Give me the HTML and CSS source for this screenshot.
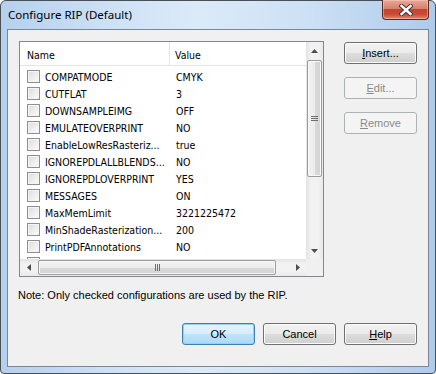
FILE: index.html
```html
<!DOCTYPE html>
<html>
<head>
<meta charset="utf-8">
<link rel="stylesheet" href="styles.css">
</head>
<body>
<div class="window">
  <div class="titlebar">
    <span class="title">Configure RIP (Default)</span>
    <div class="close">
      <svg width="14" height="12" viewBox="0 0 14 12">
        <path d="M2.5 2 L11.5 10 M11.5 2 L2.5 10" stroke="#3b3b3b" stroke-width="4.4" stroke-linecap="square"/>
        <path d="M2.5 2 L11.5 10 M11.5 2 L2.5 10" stroke="#ffffff" stroke-width="2.4" stroke-linecap="square"/>
      </svg>
    </div>
  </div>
  <div class="client">
    <div class="main">
      <div class="listview">
        <div class="lv-content">
          <div class="lv-header">
            <div class="hcol hname">Name</div>
            <div class="hcol hvalue">Value</div>
          </div>
          <div class="rows">
            <div class="row"><span class="cb"></span><span class="n">COMPATMODE</span><span class="v">CMYK</span></div>
            <div class="row"><span class="cb"></span><span class="n">CUTFLAT</span><span class="v">3</span></div>
            <div class="row"><span class="cb"></span><span class="n">DOWNSAMPLEIMG</span><span class="v">OFF</span></div>
            <div class="row"><span class="cb"></span><span class="n">EMULATEOVERPRINT</span><span class="v">NO</span></div>
            <div class="row"><span class="cb"></span><span class="n">EnableLowResRasteriz...</span><span class="v">true</span></div>
            <div class="row"><span class="cb"></span><span class="n">IGNOREPDLALLBLENDS...</span><span class="v">NO</span></div>
            <div class="row"><span class="cb"></span><span class="n">IGNOREPDLOVERPRINT</span><span class="v">YES</span></div>
            <div class="row"><span class="cb"></span><span class="n">MESSAGES</span><span class="v">ON</span></div>
            <div class="row"><span class="cb"></span><span class="n">MaxMemLimit</span><span class="v">3221225472</span></div>
            <div class="row"><span class="cb"></span><span class="n">MinShadeRasterization...</span><span class="v">200</span></div>
            <div class="row"><span class="cb"></span><span class="n">PrintPDFAnnotations</span><span class="v">NO</span></div>
            <div class="row"><span class="cb"></span><span class="n">SPOTRENDERINTENT</span><span class="v">0</span></div>
          </div>
        </div>
        <div class="vscroll">
          <div class="sbtn"><svg width="7" height="4" viewBox="0 0 7 4"><path d="M3.5 0 L7 4 L0 4 Z" fill="#4d4d4d"/></svg></div>
          <div class="vtrack">
            <div class="vthumb"><span class="grip-v"></span></div>
          </div>
          <div class="sbtn"><svg width="7" height="4" viewBox="0 0 7 4"><path d="M0 0 L7 0 L3.5 4 Z" fill="#4d4d4d"/></svg></div>
        </div>
        <div class="hscroll">
          <div class="sbtn"><svg width="4" height="7" viewBox="0 0 4 7"><path d="M4 0 L4 7 L0 3.5 Z" fill="#4d4d4d"/></svg></div>
          <div class="htrack">
            <div class="hthumb"><span class="grip-h"></span></div>
          </div>
          <div class="sbtn"><svg width="4" height="7" viewBox="0 0 4 7"><path d="M0 0 L4 3.5 L0 7 Z" fill="#4d4d4d"/></svg></div>
        </div>
        <div class="corner"></div>
      </div>
      <div class="side-buttons">
        <button class="btn"><u>I</u>nsert...</button>
        <button class="btn disabled"><u>E</u>dit...</button>
        <button class="btn disabled"><u>R</u>emove</button>
      </div>
    </div>
    <p class="note">Note: Only checked configurations are used by the RIP.</p>
    <div class="footer">
      <button class="btn default">OK</button>
      <button class="btn">Cancel</button>
      <button class="btn"><u>H</u>elp</button>
    </div>
  </div>
</div>
</body>
</html>
```

FILE: styles.css
```css
html, body {
  margin: 0;
  padding: 0;
  background: #ffffff;
}

.window {
  box-sizing: border-box;
  width: 436px;
  height: 374px;
  border: 1px solid #4a4f55;
  border-radius: 6px 6px 4px 4px;
  background: linear-gradient(90deg, #b5d0ee 0%, #cde1f6 25%, #dbeaf9 45%, #cde1f5 70%, #afcbea 100%);
  display: flex;
  flex-direction: column;
  font-family: "Liberation Sans", Arial, sans-serif;
  font-size: 11px;
  color: #000;
}

.titlebar {
  height: 28px;
  display: flex;
  align-items: flex-start;
  padding-left: 7px;
}

.title {
  font-family: "Noto Sans", "Open Sans", sans-serif;
  font-size: 11.5px;
  line-height: 14px;
  margin-top: 7px;
  color: #000;
}

.close {
  margin-left: auto;
  margin-right: 6px;
  margin-top: -1px;
  width: 47px;
  height: 20px;
  box-sizing: border-box;
  border: 1px solid #5d2a22;
  border-top: none;
  border-radius: 0 0 4px 4px;
  background: linear-gradient(#e9a99b 0%, #d8806e 45%, #c5432f 50%, #c94a35 75%, #dd8a6e 100%);
  box-shadow: inset 0 0 0 1px rgba(255, 210, 200, 0.45);
  display: flex;
  align-items: center;
  justify-content: center;
}

.client {
  flex: 1;
  margin: 0 6px 6px 6px;
  border: 1px solid #7a8797;
  background: #f0f0f0;
  padding: 11px 11px 0 11px;
  display: flex;
  flex-direction: column;
}

.main {
  display: flex;
  align-items: flex-start;
}

.listview {
  box-sizing: border-box;
  width: 305px;
  height: 236px;
  border: 1px solid #828790;
  background: #fff;
  display: grid;
  grid-template-columns: 286px 17px;
  grid-template-rows: 217px 17px;
}

.lv-content {
  overflow: hidden;
  font-family: "DejaVu Sans Condensed", "DejaVu Sans", sans-serif;
  font-stretch: condensed;
  font-size: 10.5px;
}

.lv-header {
  display: flex;
  height: 23px;
  border-bottom: 1px solid #e5e5e5;
  line-height: 26px;
}

.hcol {
  box-sizing: border-box;
  padding-left: 7px;
}

.hname {
  width: 150px;
  border-right: 1px solid #e5e5e5;
}

.hvalue {
  padding-left: 5px;
}

.rows {
  padding-top: 2px;
}

.row {
  display: flex;
  align-items: center;
  height: 17px;
}

.cb {
  box-sizing: border-box;
  width: 13px;
  height: 13px;
  margin-left: 7px;
  border: 1px solid #8e8f8f;
  background: linear-gradient(135deg, #dcdcdc 0%, #f6f6f6 80%, #fdfdfd 100%);
  box-shadow: inset 0 0 0 1px #f4f4f4;
  flex: none;
}

.n {
  width: 126px;
  padding-left: 5px;
  white-space: nowrap;
  overflow: hidden;
  flex: none;
}

.v {
  padding-left: 5px;
  white-space: nowrap;
}

.vscroll {
  display: flex;
  flex-direction: column;
  background: linear-gradient(90deg, #e3e3e3 0%, #f2f2f2 30%, #f2f2f2 70%, #e9e9e9 100%);
}

.hscroll {
  display: flex;
  background: linear-gradient(#e3e3e3 0%, #f2f2f2 30%, #f2f2f2 70%, #e9e9e9 100%);
}

.sbtn {
  width: 17px;
  height: 17px;
  flex: none;
  display: flex;
  align-items: center;
  justify-content: center;
}

.vtrack {
  flex: 1;
  padding: 1px 1px;
  display: flex;
  flex-direction: column;
}

.vthumb {
  box-sizing: border-box;
  height: 117px;
  border: 1px solid #9b9b9b;
  border-radius: 2px;
  background: linear-gradient(90deg, #f3f3f3 0%, #ececec 50%, #d9d9d9 51%, #d3d3d3 100%);
  box-shadow: inset 0 0 0 1px #f8f8f8;
  display: flex;
  align-items: center;
  justify-content: center;
}

.grip-v {
  width: 7px;
  height: 5px;
  background: repeating-linear-gradient(#6e6e6e 0 1px, transparent 1px 2px);
}

.htrack {
  flex: 1;
  padding: 1px 13px 1px 1px;
  display: flex;
}

.hthumb {
  box-sizing: border-box;
  flex: 1;
  border: 1px solid #9b9b9b;
  border-radius: 2px;
  background: linear-gradient(#f3f3f3 0%, #ececec 50%, #d9d9d9 51%, #d3d3d3 100%);
  box-shadow: inset 0 0 0 1px #f8f8f8;
  display: flex;
  align-items: center;
  justify-content: center;
}

.grip-h {
  width: 5px;
  height: 7px;
  background: repeating-linear-gradient(90deg, #6e6e6e 0 1px, transparent 1px 2px);
}

.corner {
  background: #f0f0f0;
}

.side-buttons {
  display: flex;
  flex-direction: column;
  gap: 13px;
  margin-left: 20px;
  padding-top: 1px;
}

.btn {
  box-sizing: border-box;
  width: 73px;
  height: 22px;
  border: 1px solid #707070;
  border-radius: 3px;
  background: linear-gradient(#f2f2f2 0%, #ebebeb 48%, #dddddd 52%, #cfcfcf 100%);
  box-shadow: inset 0 0 0 1px #fbfbfb;
  font-family: "Liberation Sans", Arial, sans-serif;
  font-size: 11px;
  color: #000;
  padding: 0;
  margin: 0;
}

.btn.disabled {
  border-color: #adb2b5;
  background: #f4f4f4;
  box-shadow: none;
  color: #8b8b8b;
}

.btn.default {
  border-color: #3c7fb1;
  background: linear-gradient(#e5f4fc 0%, #d6eefc 48%, #bfe4f9 52%, #a9daf6 100%);
  box-shadow: inset 0 0 0 1px #98d1ef;
}

.note {
  margin: 12px 0 0 -1px;
  line-height: 13px;
}

.footer {
  display: flex;
  justify-content: flex-end;
  gap: 8px;
  margin-top: 21px;
}
```
